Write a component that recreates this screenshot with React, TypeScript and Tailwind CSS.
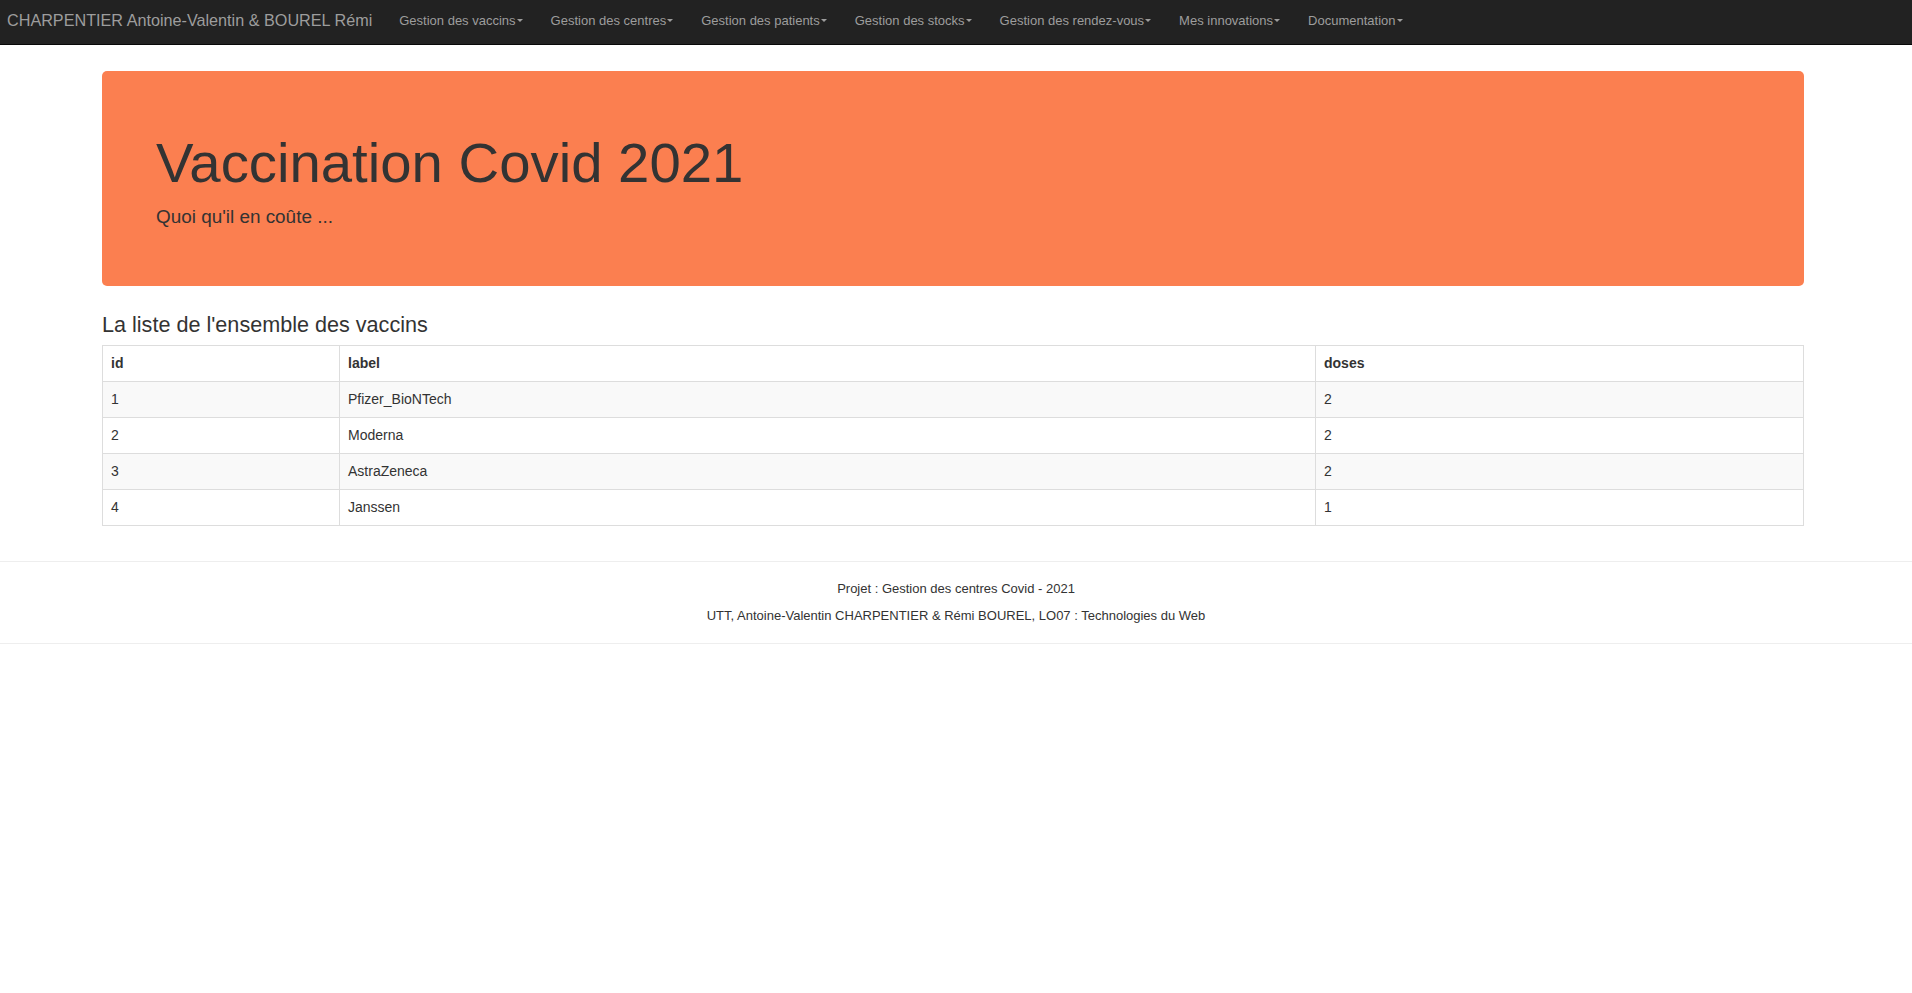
const navItems = [
  'Gestion des vaccins',
  'Gestion des centres',
  'Gestion des patients',
  'Gestion des stocks',
  'Gestion des rendez-vous',
  'Mes innovations',
  'Documentation',
];

const vaccins = [
  { id: 1, label: 'Pfizer_BioNTech', doses: 2 },
  { id: 2, label: 'Moderna', doses: 2 },
  { id: 3, label: 'AstraZeneca', doses: 2 },
  { id: 4, label: 'Janssen', doses: 1 },
];

function Caret() {
  return (
    <span className="ml-[1px] inline-block h-0 w-0 border-x-[3px] border-t-[3px] border-x-transparent border-t-[#9d9d9d] align-middle" />
  );
}

export default function App() {
  return (
    <div className="min-h-screen bg-white font-['Liberation_Sans',Arial,sans-serif] text-[#333]">
      {/* Navbar */}
      <nav className="flex h-[45px] items-center border-b border-[#080808] bg-[#222] pb-[3px]">
        <a className="pl-[7px] pr-[13px] text-[16.2px] text-[#9d9d9d]">
          CHARPENTIER Antoine-Valentin &amp; BOUREL Rémi
        </a>
        <ul className="flex">
          {navItems.map((item) => (
            <li key={item} className="flex items-center px-[14px] text-[13px] text-[#9d9d9d]">
              {item}
              <Caret />
            </li>
          ))}
        </ul>
      </nav>

      <main className="ml-[102px] w-[1702px]">
        {/* Jumbotron */}
        <section className="mt-[26px] rounded-[5px] bg-[#fb7f50] px-[54px] pt-[43px] pb-[43px]">
          <h1 className="mt-[18px] mb-[9px] text-[56.3px] leading-[1.1] text-[#333]">
            Vaccination Covid 2021
          </h1>
          <p className="mb-[13.5px] text-[18.9px] leading-[27px] text-[#333]">Quoi qu'il en coûte ...</p>
        </section>

        {/* Liste des vaccins */}
        <h3 className="mt-[27px] mb-[8px] text-[21.6px] leading-[1.1] text-[#333]">
          La liste de l'ensemble des vaccins
        </h3>
        <table className="w-full table-fixed border-collapse border border-[#ddd] text-[14px] leading-[19px]">
          <thead>
            <tr>
              <th className="w-[237px] border border-[#ddd] px-[8px] py-[8px] text-left font-bold">id</th>
              <th className="border border-[#ddd] px-[8px] py-[8px] text-left font-bold">label</th>
              <th className="w-[488px] border border-[#ddd] px-[8px] py-[8px] text-left font-bold">doses</th>
            </tr>
          </thead>
          <tbody>
            {vaccins.map((v, i) => (
              <tr key={v.id} className={i % 2 === 0 ? 'bg-[#f9f9f9]' : 'bg-white'}>
                <td className="border border-[#ddd] px-[8px] py-[8px]">{v.id}</td>
                <td className="border border-[#ddd] px-[8px] py-[8px]">{v.label}</td>
                <td className="border border-[#ddd] px-[8px] py-[8px]">{v.doses}</td>
              </tr>
            ))}
          </tbody>
        </table>
      </main>

      {/* Footer */}
      <footer className="mt-[35px] border-y border-[#eee] pt-[18px] pb-[18px] text-center text-[13px] leading-[18px] text-[#333]">
        <p>Projet : Gestion des centres Covid - 2021</p>
        <p className="mt-[9px]">UTT, Antoine-Valentin CHARPENTIER &amp; Rémi BOUREL, LO07 : Technologies du Web</p>
      </footer>
    </div>
  );
}
